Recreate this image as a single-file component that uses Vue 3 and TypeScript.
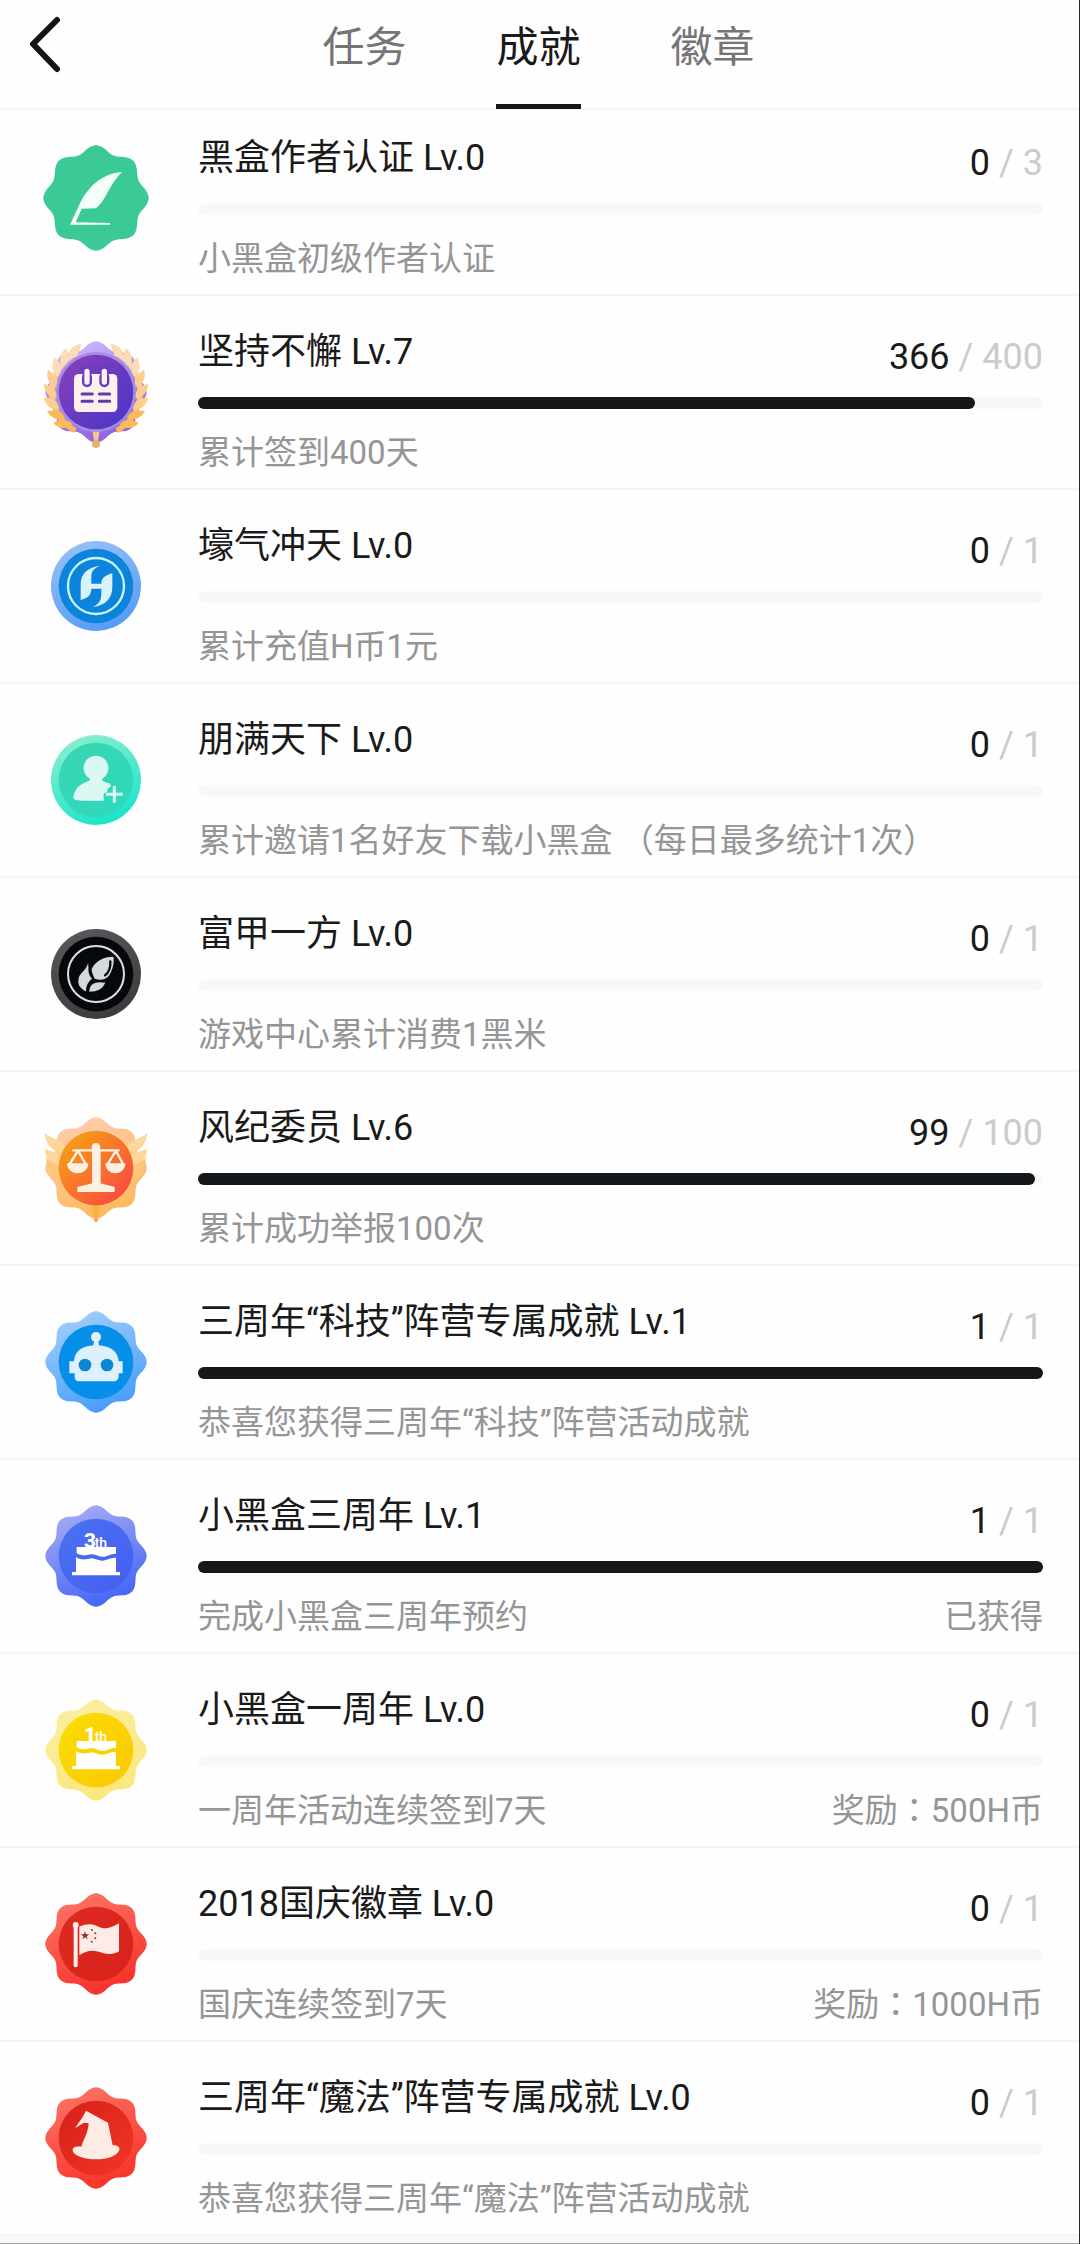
<script setup lang="ts">
interface Achievement {
  icon: string
  title: string
  level: number
  current: number
  total: number
  desc: string
  note?: string
}

const tabs: string[] = ['任务', '成就', '徽章']
const activeTab = '成就'

const achievements: Achievement[] = [
  { icon: 'feather', title: '黑盒作者认证', level: 0, current: 0, total: 3, desc: '小黑盒初级作者认证' },
  { icon: 'calendar', title: '坚持不懈', level: 7, current: 366, total: 400, desc: '累计签到400天' },
  { icon: 'coin', title: '壕气冲天', level: 0, current: 0, total: 1, desc: '累计充值H币1元' },
  { icon: 'friend', title: '朋满天下', level: 0, current: 0, total: 1, desc: '累计邀请1名好友下载小黑盒 （每日最多统计1次）' },
  { icon: 'rocket', title: '富甲一方', level: 0, current: 0, total: 1, desc: '游戏中心累计消费1黑米' },
  { icon: 'scales', title: '风纪委员', level: 6, current: 99, total: 100, desc: '累计成功举报100次' },
  { icon: 'robot', title: '三周年“科技”阵营专属成就', level: 1, current: 1, total: 1, desc: '恭喜您获得三周年“科技”阵营活动成就' },
  { icon: 'cake3', title: '小黑盒三周年', level: 1, current: 1, total: 1, desc: '完成小黑盒三周年预约', note: '已获得' },
  { icon: 'cake1', title: '小黑盒一周年', level: 0, current: 0, total: 1, desc: '一周年活动连续签到7天', note: '奖励：500H币' },
  { icon: 'flag', title: '2018国庆徽章', level: 0, current: 0, total: 1, desc: '国庆连续签到7天', note: '奖励：1000H币' },
  { icon: 'hat', title: '三周年“魔法”阵营专属成就', level: 0, current: 0, total: 1, desc: '恭喜您获得三周年“魔法”阵营活动成就' },
]

const percent = (a: Achievement): number => Math.round((a.current / a.total) * 100)

// Eight-lobed badge outline around the origin
function scallop(radius: number, depth: number): string {
  const steps = 160
  const points: string[] = []
  for (let i = 0; i < steps; i++) {
    const t = (i / steps) * Math.PI * 2
    const r = radius + depth * Math.cos(8 * t)
    points.push(`${(r * Math.cos(t)).toFixed(1)} ${(r * Math.sin(t)).toFixed(1)}`)
  }
  return `M${points.join('L')}Z`
}

const badge = scallop(142, 10)
const bigBadge = scallop(148, 10)

// Outer and inner gradients (from, to) of each badge
const palette: Record<string, [string, string, string, string]> = {
  feather: ['#3bc995', '#3bc995', '#3bc995', '#3bc995'],
  calendar: ['#d0b8ff', '#8a63dc', '#8440bd', '#4e35c6'],
  coin: ['#98c0f6', '#559cf8', '#0c84dc', '#0c84dc'],
  friend: ['#8cefcd', '#1be4cc', '#38d6b2', '#30d8bc'],
  rocket: ['#58585a', '#3c3c3e', '#06080c', '#06080c'],
  scales: ['#fdcdb0', '#fdba5c', '#f5a015', '#fb4a42'],
  robot: ['#a4cffa', '#479cfb', '#068fe8', '#068fe8'],
  cake3: ['#a9aef5', '#4265f6', '#4a70f2', '#4560f0'],
  cake1: ['#faeea4', '#fce77a', '#f9dc05', '#fcc900'],
  flag: ['#fd7666', '#f6302a', '#dd2a20', '#d8221a'],
  hat: ['#fc7565', '#f8322a', '#d9221a', '#ee3425'],
}
const round = ['coin', 'friend', 'rocket']

// Laurel leaves of the right half: x, y, rotation
const leaves: [number, number, number][] = [
  [66, -118, -120], [94, -98, -88], [116, -70, -70], [128, -36, -52],
  [132, 0, -36], [128, 36, -24], [114, 68, -8], [94, 94, 8],
]
</script>

<template>
  <main class="page">
    <header class="header">
      <button class="back" type="button" aria-label="返回">
        <svg viewBox="0 0 36 60" width="36" height="60" aria-hidden="true">
          <path d="M30 6L6 30L30 55" fill="none" stroke="#151515" stroke-width="6" stroke-linecap="round" stroke-linejoin="round" />
        </svg>
      </button>
      <nav class="tabs">
        <button v-for="tab in tabs" :key="tab" type="button" class="tab" :class="{ active: tab === activeTab }">{{ tab }}</button>
      </nav>
    </header>

    <ul class="list">
      <li v-for="a in achievements" :key="a.title" class="row">
        <svg class="icon" viewBox="-168 -168 336 336" aria-hidden="true">
          <defs>
            <linearGradient :id="`outer-${a.icon}`" x1="0.2" y1="0" x2="0.6" y2="1">
              <stop offset="0" :stop-color="palette[a.icon][0]" />
              <stop offset="1" :stop-color="palette[a.icon][1]" />
            </linearGradient>
            <linearGradient :id="`inner-${a.icon}`" x1="0.1" y1="0.1" x2="0.9" y2="0.9">
              <stop offset="0" :stop-color="palette[a.icon][2]" />
              <stop offset="1" :stop-color="palette[a.icon][3]" />
            </linearGradient>
            <linearGradient v-if="a.icon === 'calendar'" id="gold" gradientUnits="userSpaceOnUse" x1="0" y1="-130" x2="0" y2="130">
              <stop offset="0" stop-color="#fbe0bb" />
              <stop offset="1" stop-color="#fbb64e" />
            </linearGradient>
          </defs>

          <circle v-if="round.includes(a.icon)" r="135" :fill="`url(#outer-${a.icon})`" />
          <path v-else :d="a.icon === 'feather' ? bigBadge : badge" :fill="`url(#outer-${a.icon})`" />

          <g v-if="a.icon === 'calendar'">
            <g v-for="side in [1, -1]" :key="side" :transform="`scale(${side} 1)`">
              <path d="M56 -118A130 130 0 0 1 62 116" fill="none" stroke="url(#gold)" stroke-width="16" />
              <path v-for="(leaf, i) in leaves" :key="i" d="M-22 6C-12 -14 12 -14 34 -6C20 14 -4 20 -22 6Z" :fill="i < 3 ? '#fbdcb4' : i < 6 ? '#fbce8e' : '#fbb95a'" :transform="`translate(${leaf[0]} ${leaf[1]}) rotate(${leaf[2]})`" />
            </g>
            <path d="M-12 110H12L6 146H-6Z" fill="#f3c591" />
            <circle cy="156" r="12" fill="#e9b167" />
          </g>
          <g v-if="a.icon === 'scales'">
            <g v-for="side in [1, -1]" :key="side" :transform="`scale(${side} 1)`" fill="#fbd79a">
              <path d="M92 -66C108 -88 134 -86 154 -106C152 -78 140 -58 108 -44Z" />
              <path d="M106 -40C122 -52 138 -48 152 -58C154 -34 140 -16 112 -8Z" />
              <path d="M110 0C128 -10 140 -14 150 -34C150 -2 136 24 112 32Z" fill="#fcc578" />
            </g>
            <path d="M-12 112H12L6 158Q0 168 -6 158Z" fill="#f9b047" />
          </g>

          <circle v-if="a.icon === 'calendar'" r="120" fill="#a78be0" />
          <circle v-if="a.icon !== 'feather'" r="112" :fill="`url(#inner-${a.icon})`" />

          <path v-if="a.icon === 'feather'" fill="#f4fffa" d="M78 -78C18 -74 -26 -32 -50 20L-78 80H42V75L-61 73L-43 32L0 31C18 16 24 2 37 -21C48 -40 60 -60 78 -78Z" />

          <g v-else-if="a.icon === 'calendar'">
            <rect x="-66" y="-54" width="130" height="114" rx="14" fill="#fdf0ef" />
            <g v-for="x in [-27, 25]" :key="x">
              <rect :x="x - 15" y="-60" width="30" height="46" rx="15" fill="#693bbf" />
              <rect :x="x - 15" y="-76" width="30" height="22" fill="#693bbf" />
              <rect :x="x - 8" y="-70" width="16" height="48" rx="8" fill="#fdf0ef" />
            </g>
            <path d="M-42 6H-11M10 6H41M-42 28H-11M10 28H41" stroke="#5a3cac" stroke-width="9" stroke-linecap="round" />
          </g>

          <g v-else-if="a.icon === 'coin'">
            <circle r="84" fill="none" stroke="#c2f7fc" stroke-width="7" />
            <path fill="#d9f3fb" d="M12 -61C-31 -55 -46 -32 -46 -5V42C-26 36 -14 28 -14 8H16V22C16 44 8 56 -10 63C30 60 49 34 49 4V-38C28 -32 16 -24 16 -7H-14V-30C-14 -46 -4 -54 12 -61Z" />
          </g>

          <g v-else-if="a.icon === 'friend'" fill="#dcf8f2">
            <circle cy="-36" r="37" />
            <path d="M-16 -6H18C16 2 24 6 40 10L46 18L34 28V36L24 40Q20 48 24 62H-40C-64 62 -68 58 -68 52C-66 24 -42 8 -20 2Z" />
            <path d="M55 18V68M30 43H80" stroke="#dcf8f2" stroke-width="9" />
          </g>

          <g v-else-if="a.icon === 'rocket'" fill="#d6d9da">
            <circle r="84" fill="none" stroke="#dde2e3" stroke-width="6" />
            <path d="M52 -52C22 -52 -2 -38 -13 -16C-14 -6 -8 4 -4 14C14 20 30 18 40 4C50 -14 56 -34 52 -52Z" />
            <path d="M43 -38C44 -20 38 -4 27 4" fill="none" stroke="#06080c" stroke-width="7" stroke-linecap="round" />
            <path d="M-24 -32C-20 -16 -28 -4 -12 14C-24 24 -30 34 -30 52C-46 44 -54 34 -53 20C-52 -4 -30 -8 -24 -32Z" />
            <path d="M-20 53C-20 32 -6 20 28 26C18 46 4 52 -20 53Z" />
          </g>

          <g v-else-if="a.icon === 'scales'">
            <path d="M-10 -54V48L-54 58V70H54V58L12 48V-54Z" fill="#fef1e2" stroke="#fef1e2" stroke-width="4" stroke-linejoin="round" />
            <circle cy="-62" r="13" fill="#fef1e2" />
            <path d="M-68 -53H68M-54 -52L-80 -10M-54 -52L-30 -10M60 -52L34 -10M60 -52L82 -10" fill="none" stroke="#fef1e2" stroke-width="7" stroke-linecap="round" />
            <path d="M-87 -14H-23C-24 26 -86 26 -87 -14ZM28 -14H88C87 26 29 26 28 -14Z" fill="#fef1e2" />
          </g>

          <g v-else-if="a.icon === 'robot'">
            <circle cy="-75" r="15" fill="#ddf3fc" />
            <path d="M-6 -64H7L10 -44H-9ZM-66 -2C-64 -34 -40 -50 0 -50S66 -34 68 -2H80V34H68V44Q66 58 50 58H-48Q-64 58 -64 44V34H-80V-2Z" fill="#ddf0fb" />
            <circle cx="-33" cy="9" r="19" fill="#0b86d6" />
            <circle cx="33" cy="9" r="19" fill="#0b86d6" />
          </g>

          <g v-else-if="a.icon === 'cake3' || a.icon === 'cake1'" fill="#fffefa">
            <text x="-36" y="-25" class="numeral">{{ a.icon === 'cake3' ? '3' : '1' }}</text>
            <text x="-4" y="-25" class="ordinal">th</text>
            <path d="M-58 -27H60V-7C44 -8 36 2 20 2C6 2 -2 -8 -16 -5C-28 -3 -40 2 -58 -8Z" />
            <path d="M-60 3C-44 14 -28 10 -14 7C0 8 8 15 20 14C36 13 46 3 60 6V48H72V58H-72V48H-60Z" />
          </g>

          <g v-else-if="a.icon === 'flag'">
            <circle cx="-61" cy="-57" r="9" fill="#fff1ee" />
            <path d="M-61 -54V64" stroke="#fff1ee" stroke-width="12" stroke-linecap="round" />
            <path d="M-50 -52C-14 -68 0 -54 18 -48C38 -44 50 -52 69 -62V22C44 38 20 26 2 22C-20 18 -30 22 -50 34Z" fill="#fdebe7" />
            <path d="M-33 -39L-30 -29H-20L-28 -23L-25 -14L-33 -20L-41 -14L-38 -23L-46 -29H-36Z" fill="#9a2f29" />
            <g fill="#9a2f29">
              <circle cx="-12" cy="-42" r="3" /><circle cx="-2" cy="-32" r="3" />
              <circle cx="-2" cy="-17" r="3" /><circle cx="-13" cy="-7" r="3" />
            </g>
          </g>

          <g v-else-if="a.icon === 'hat'" fill="#fdebe6">
            <path d="M-30 -82L36 -46L50 22C66 22 72 28 70 36C64 54 34 64 0 64S-66 54 -70 38C-72 28 -60 24 -44 26C-38 4 -24 -12 -22 -44L-36 -46L-62 -30C-50 -50 -40 -60 -30 -82Z" />
          </g>
        </svg>

        <div class="info">
          <div class="head">
            <h2 class="title">{{ a.title }} Lv.{{ a.level }}</h2>
            <p class="count">{{ a.current }}<span class="total"> / {{ a.total }}</span></p>
          </div>
          <div class="track" role="progressbar" :aria-label="a.title" :aria-valuenow="a.current" aria-valuemin="0" :aria-valuemax="a.total">
            <div class="fill" :style="{ width: percent(a) + '%' }"></div>
          </div>
          <div class="foot">
            <p>{{ a.desc }}</p>
            <p v-if="a.note" class="note">{{ a.note }}</p>
          </div>
        </div>
      </li>
    </ul>
    <div class="tail"></div>
  </main>
</template>

<style>
body {
  margin: 0;
  background: #fefefe;
}
</style>

<style scoped>
.page {
  border-right: 1px solid #26282c;
  background: #fefefe;
  color: #1a1a1a;
  font-family: Roboto, "Noto Sans CJK SC", sans-serif;
}

.header {
  display: grid;
  grid-template-columns: 1fr auto 1fr;
  height: 108px;
  padding-right: 2px;
  border-bottom: 2px solid #f5f5f5;
}

button {
  padding: 0;
  border: 0;
  background: none;
  font: inherit;
}

.back {
  justify-self: start;
  align-self: start;
  height: 60px;
  margin: 14px 0 0 27px;
}

.back svg {
  display: block;
}

.tabs {
  display: flex;
  gap: 90px;
}

.tab {
  box-sizing: border-box;
  height: 109px;
  padding-bottom: 8px;
  border-bottom: 5px solid transparent;
  color: #757575;
  font-size: 42px;
  line-height: 96px;
}

.tab.active {
  border-bottom-color: #151515;
  color: #1a1a1a;
}

.list {
  margin: 0;
  padding: 0;
  list-style: none;
}

.row {
  display: flex;
  align-items: flex-start;
  gap: 46px;
  padding: 31px 36px 13px 40px;
  border-bottom: 2px solid #f5f5f5;
}

.row:first-child {
  padding-top: 23px;
}

.icon {
  flex: none;
  width: 112px;
  height: 112px;
  margin-top: 9px;
}

.numeral {
  font-size: 62px;
  font-weight: 900;
}

.ordinal {
  font-size: 42px;
  font-weight: 500;
}

.info {
  flex: 1;
  min-width: 0;
}

.head,
.foot {
  display: flex;
  justify-content: space-between;
  align-items: flex-start;
}

.title,
.count,
.foot p {
  margin: 0;
  font-weight: 400;
}

.title {
  font-size: 36px;
  line-height: 50px;
}

.count {
  font-size: 36px;
  line-height: 60px;
}

.total {
  color: #cbcbcb;
}

.track {
  height: 12px;
  margin-top: 10px;
  border-radius: 6px;
  background: #f8f8f8;
}

.fill {
  height: 100%;
  border-radius: 6px;
  background: #14181b;
}

.foot {
  margin-top: 22px;
  color: #959595;
  font-size: 33px;
  line-height: 44px;
}

/* The traditional face centres the full-width colon */
.note {
  font-family: Roboto, "Noto Sans CJK TC", sans-serif;
}

.tail {
  height: 7px;
  border-bottom: 1px solid #a8a8a8;
  background: #f9f9f9;
}
</style>
